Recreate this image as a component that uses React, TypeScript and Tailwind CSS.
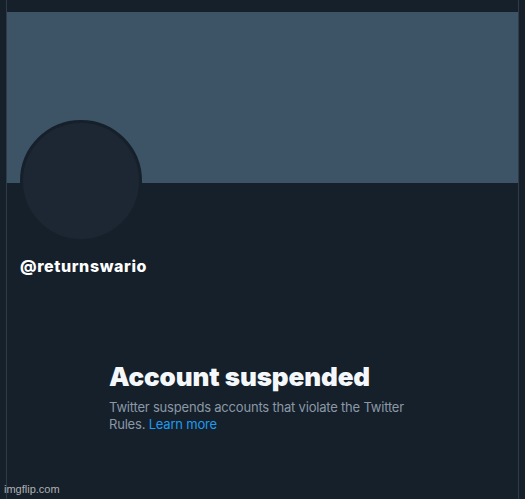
export default function App() {
  return (
    <div className="relative h-[499px] w-[525px] overflow-hidden bg-[#15202b] px-[6px] font-['Inter',sans-serif]">
      <div className="flex h-full flex-col border-x border-[#2f3b47] pt-[12px]">
        {/* header banner */}
        <div className="h-[171px] bg-[#3d5466]" />

        {/* avatar */}
        <div className="-mt-[63px] ml-[13px] h-[122px] w-[122px] rounded-full border-[3px] border-[#15202b] bg-[#1c2733]" />

        <div className="ml-[13px] mt-[14px] text-[16px] font-extrabold leading-[20px] tracking-[0.6px] text-white">
          @returnswario
        </div>

        <div className="ml-[102px] mt-[85px] w-[310px]">
          <h1 className="text-[26px] font-black leading-[32px] tracking-[-0.1px] text-[#f5f8fa]">
            Account suspended
          </h1>
          <p className="mt-[6px] text-[13px] leading-[17px] tracking-[-0.2px] text-[#8b98a5]">
            Twitter suspends accounts that violate the Twitter Rules. <span className="text-[#1d9bf0]">Learn more</span>
          </p>
        </div>
      </div>

      {/* watermark */}
      <div className="absolute bottom-[2px] left-[4px] font-['Liberation_Sans',sans-serif] text-[11px] text-[#b0b0b0]">
        imgflip.com
      </div>
    </div>
  );
}
